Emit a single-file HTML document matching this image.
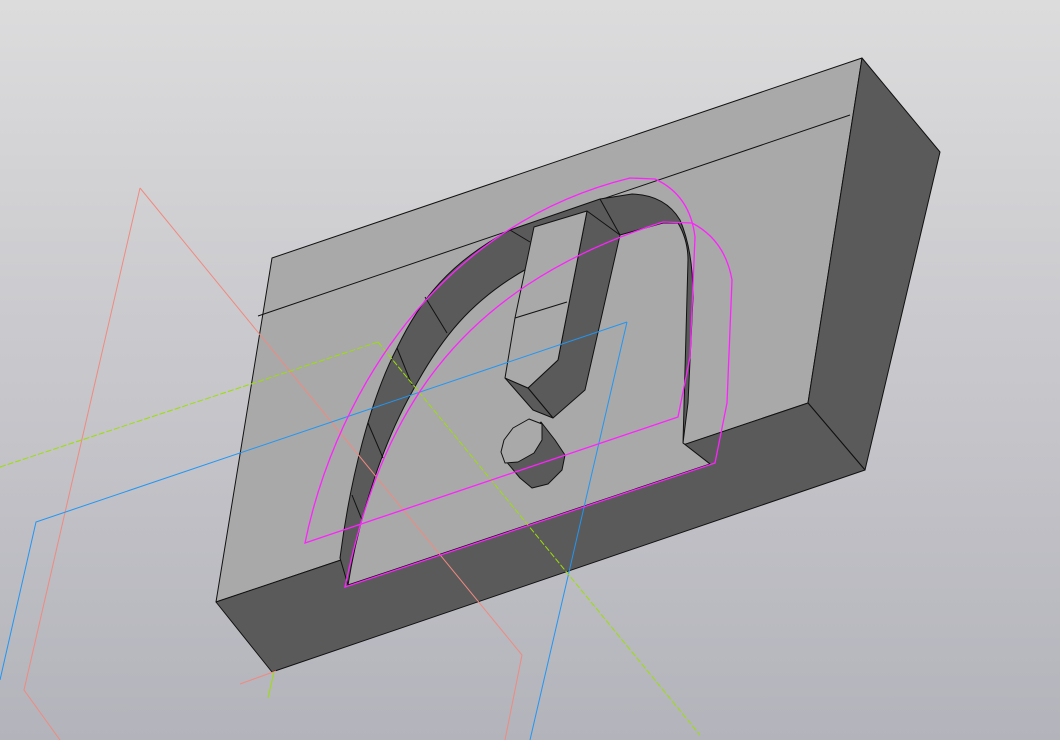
<!DOCTYPE html>
<html><head><style>
html,body{margin:0;padding:0;width:1060px;height:740px;overflow:hidden}
svg{display:block}
</style></head><body>
<svg width="1060" height="740" viewBox="0 0 1060 740" xmlns="http://www.w3.org/2000/svg">
<defs><linearGradient id="bg" x1="0" y1="0" x2="0" y2="1">
<stop offset="0" stop-color="#dcdcdd"/><stop offset="1" stop-color="#b3b3bb"/></linearGradient></defs>
<rect width="1060" height="740" fill="url(#bg)"/>
<g stroke="#111" stroke-width="1" stroke-linejoin="round">
<polygon points="272,258 862,58 808,403 216,602" fill="#a9a9a9"/>
<polygon points="862,58 940,152 865,470 808,403" fill="#5a5a5a"/>
<polygon points="216,602 808,403 865,470 272,672" fill="#5a5a5a"/>
<line x1="258" y1="316" x2="850" y2="115"/>
<path d="M348,585 L340,558 C350,480 370,400 397,348 C420,300 450,262 510,230 L600,199 L632,194 Q665,195 680,220 Q693,250 693,297 L688,403 L683,443 L710,464 Z" fill="#5a5a5a"/>
<path d="M348,585 C360,510 385,440 412,392 C440,340 470,300 530,267 L620,235 L663,223 L678,223 Q688,240 688,260 L683,443 L710,464 Z" fill="#a9a9a9"/>
<g fill="none">
<line x1="510" y1="230" x2="530" y2="242"/>
<line x1="425" y1="297" x2="447" y2="333"/>
<line x1="397" y1="348" x2="412" y2="385"/>
<line x1="368" y1="423" x2="383" y2="458"/>
<line x1="352" y1="495" x2="362" y2="520"/>
<line x1="600" y1="199" x2="620" y2="235"/>
</g>
<polygon points="587,211 620,235 585,390 553,418 528,388 558,360" fill="#5a5a5a"/>
<polygon points="505,378 528,388 553,418 533,410" fill="#5a5a5a"/>
<polygon points="534,227 587,211 558,360 528,388 505,378 515,318" fill="#a9a9a9"/>
<line x1="515" y1="318" x2="567" y2="302"/>
<path d="M505,460 L520,478 L532,488 L548,484 L562,470 L565,455 L555,440 L541,422 L505,450 Z" fill="#5a5a5a"/>
<path d="M505,463 L501,452 L504,440 L513,428 L529,419 L542,424 L542,440 L534,453 L518,462 Z" fill="#a9a9a9"/>
</g>
<g stroke-width="1" fill="none">
<polyline points="140,188 24,690 60,740" stroke="#f08a80"/>
<polyline points="140,188 522,655 505,740" stroke="#f08a80"/>
<line x1="240" y1="684" x2="276" y2="671" stroke="#f08a80"/>
<polyline points="627,322 36,522 0,680" stroke="#2196f3"/>
<line x1="627" y1="322" x2="530" y2="740" stroke="#2196f3"/>
<line x1="0" y1="467" x2="378" y2="342" stroke="#9be000" stroke-dasharray="6,2"/>
<line x1="378" y1="342" x2="700" y2="735" stroke="#9be000" stroke-dasharray="6,2"/>
<line x1="268" y1="698" x2="274" y2="672" stroke="#9be000"/>
</g>
<g fill="none" stroke="#ff22ff" stroke-width="1.3">
<path d="M305,543 C330,420 420,230 630,178 L655,179 Q690,195 695,237 L690,357 L678,417 Z"/>
<path d="M345,587 C380,420 450,290 663,222 L692,223 Q725,240 732,280 L727,403 L715,463 Z"/>
</g>
</svg>
</body></html>
